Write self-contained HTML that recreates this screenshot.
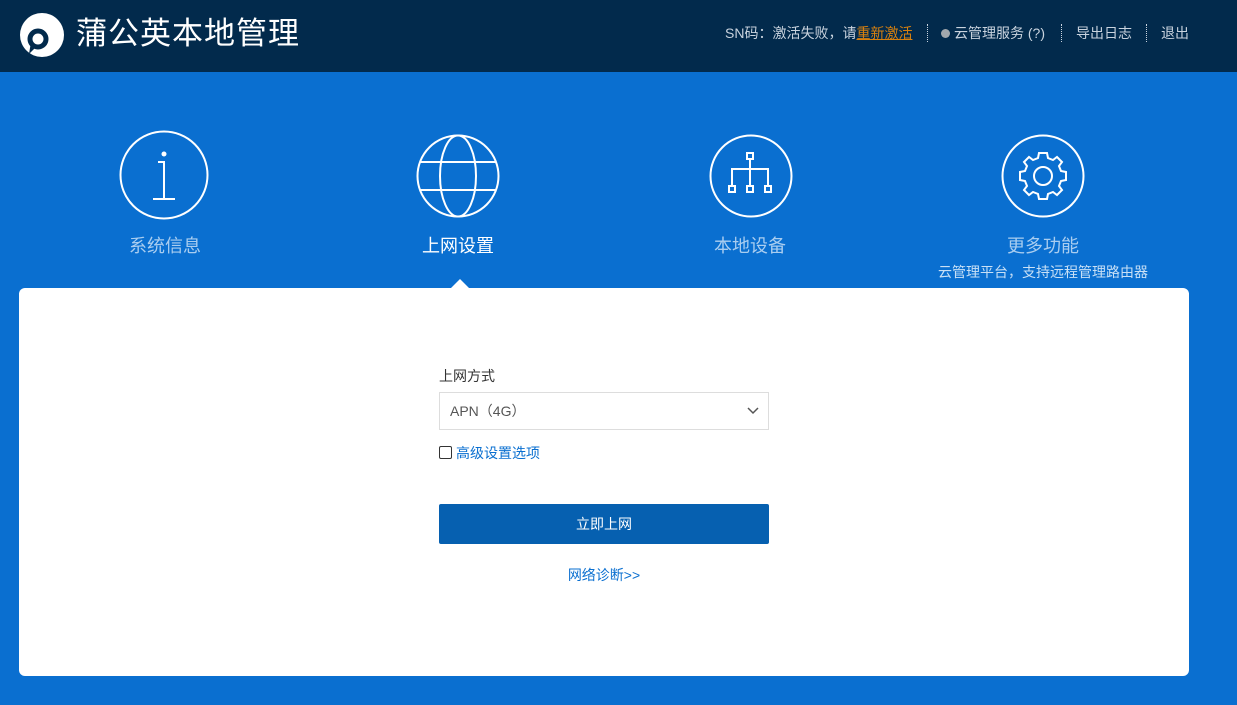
<!DOCTYPE html>
<html><head><meta charset="utf-8"><style>
*{margin:0;padding:0;box-sizing:border-box}
body{width:1237px;height:705px;background:#0a6fd0;font-family:"Liberation Sans","Noto Sans CJK SC",sans-serif;position:relative;overflow:hidden}
.hd{position:absolute;left:0;top:0;width:1237px;height:72px;background:#022a4c}
.title{position:absolute;left:76px;top:14px;color:#fff;font-size:31px;letter-spacing:1px;line-height:40px}
.top{position:absolute;top:24px;font-size:14px;color:#c9d3de;line-height:18px}
.sep{position:absolute;top:24px;height:18px;border-left:1px dotted #c9d3de}
.lbl{position:absolute;top:232px;font-size:18px;color:#a9cdf0;transform:translateX(-50%);white-space:nowrap}
.card{position:absolute;left:19px;top:288px;width:1170px;height:388px;background:#fff;border-radius:6px}
.tri{position:absolute;left:450px;top:279px;width:0;height:0;border-left:10px solid transparent;border-right:10px solid transparent;border-bottom:10px solid #fff}
svg.ic{position:absolute}
</style></head><body>
<div class="hd">
<svg style="position:absolute;left:19px;top:12px" width="46" height="46" viewBox="0 0 46 46"><circle cx="23" cy="23" r="22" fill="#fff"/><circle cx="19" cy="27" r="8" fill="none" stroke="#022a4c" stroke-width="5"/><path d="M12 30 L10 42 L18 34Z" fill="#022a4c"/></svg>
<div class="title">蒲公英本地管理</div>
<div class="top" style="left:725px">SN码：激活失败，请<span style="color:#d7800f;text-decoration:underline">重新激活</span></div>
<div class="sep" style="left:927px"></div>
<div class="top" style="left:941px"><span style="display:inline-block;width:9px;height:9px;border-radius:50%;background:#a3a8ad;margin-right:4px"></span>云管理服务 (?)</div>
<div class="sep" style="left:1061px"></div>
<div class="top" style="left:1076px">导出日志</div>
<div class="sep" style="left:1146px"></div>
<div class="top" style="left:1161px">退出</div>
</div>
<svg class="ic" style="left:119px;top:130px" width="90" height="90" viewBox="0 0 90 90" fill="none" stroke="#fff" stroke-width="2"><circle cx="45" cy="45" r="43.5"/><circle cx="45" cy="24" r="2.5" fill="#fff" stroke="none"/><path d="M39 32H45V69M34 69H56"/></svg>
<svg class="ic" style="left:416px;top:134px" width="84" height="84" viewBox="0 0 84 84" fill="none" stroke="#fff" stroke-width="2"><circle cx="42" cy="42" r="40.5"/><ellipse cx="42" cy="42" rx="18" ry="40.5"/><path d="M4 28H80M4 56H80"/></svg>
<svg class="ic" style="left:709px;top:134px" width="84" height="84" viewBox="0 0 84 84" fill="none" stroke="#fff" stroke-width="2"><circle cx="42" cy="42" r="40.5"/><rect x="38" y="19" width="6" height="6"/><rect x="20" y="52" width="6" height="6"/><rect x="38" y="52" width="6" height="6"/><rect x="56" y="52" width="6" height="6"/><path d="M41 25V52M23 52V35H59V52"/></svg>
<svg class="ic" style="left:1001px;top:134px" width="84" height="84" viewBox="0 0 84 84" fill="none" stroke="#fff" stroke-width="2"><circle cx="42" cy="42" r="40.5"/><circle cx="42" cy="42" r="9"/><path d="M38 19H46L47 24L52 26L56 23L61 28L58 32L60 37L65 38V46L60 47L58 52L61 56L56 61L52 58L47 60L46 65H38L37 60L32 58L28 61L23 56L26 52L24 47L19 46V38L24 37L26 32L23 28L28 23L32 26L37 24Z"/></svg>
<div class="lbl" style="left:165px">系统信息</div>
<div class="lbl" style="left:458px;color:#fff">上网设置</div>
<div class="lbl" style="left:750px">本地设备</div>
<div class="lbl" style="left:1043px">更多功能</div>
<div class="lbl" style="left:1043px;top:262px;font-size:14px;color:#c8e0f6">云管理平台，支持远程管理路由器</div>
<div class="tri"></div>
<div class="card">
<div style="position:absolute;left:420px;top:78px;font-size:14px;color:#333">上网方式</div>
<div style="position:absolute;left:420px;top:104px;width:330px;height:38px;border:1px solid #ddd;font-size:14px;color:#555;padding:10px 10px;line-height:16px">APN（4G）<svg style="position:absolute;right:9px;top:14px" width="12" height="8" viewBox="0 0 12 8" fill="none" stroke="#555" stroke-width="1.5"><path d="M1 1L6 6L11 1"/></svg></div>
<div style="position:absolute;left:420px;top:158px;width:13px;height:13px;border:1px solid #333;border-radius:2px"></div>
<div style="position:absolute;left:437px;top:155px;font-size:14px;color:#0a6fd0">高级设置选项</div>
<div style="position:absolute;left:420px;top:216px;width:330px;height:40px;background:#0660b0;border-radius:2px;color:#fff;font-size:14px;text-align:center;line-height:40px">立即上网</div>
<div style="position:absolute;left:420px;top:277px;width:330px;text-align:center;font-size:14px;color:#0a6fd0">网络诊断&gt;&gt;</div>
</div>
</body></html>
